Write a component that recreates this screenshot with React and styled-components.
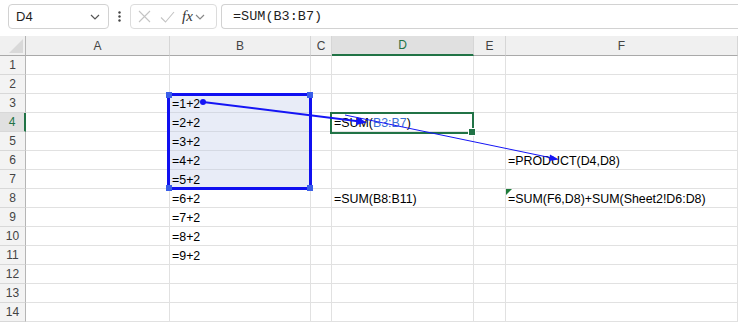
import React from 'react';
import styled, { createGlobalStyle } from 'styled-components';

const GlobalStyle = createGlobalStyle`
  html, body { margin: 0; padding: 0; background: #ffffff; }
  body { font-family: 'Liberation Sans', Arial, sans-serif; overflow: hidden; }
`;

const Page = styled.div`
  position: relative;
  width: 738px;
  height: 324px;
  overflow: hidden;
  background: #ffffff;
`;

const Toolbar = styled.div`
  display: flex;
  align-items: center;
  height: 25px;
  padding: 4px 0 7px 8px;
  gap: 0;
`;

const NameBox = styled.div`
  box-sizing: border-box;
  width: 101px;
  height: 25px;
  border: 1px solid #d2d2d2;
  border-radius: 4px;
  display: flex;
  align-items: center;
  justify-content: space-between;
  padding: 0 8px 0 7px;
  font-size: 13px;
  color: #1f1f1f;
`;

const Dots = styled.div`
  width: 21px;
  display: flex;
  justify-content: center;
`;

const FuncBox = styled.div`
  box-sizing: border-box;
  width: 87px;
  height: 25px;
  border: 1px solid #dcdcdc;
  border-radius: 4px;
  display: flex;
  align-items: center;
  padding: 0 4px 0 7px;
  gap: 9px;
`;

const Fx = styled.span`
  font-family: 'Liberation Serif', 'Times New Roman', serif;
  font-style: italic;
  font-size: 15px;
  color: #333333;
  margin-left: -2px;
  margin-right: -7px;
`;

const FormulaInput = styled.div`
  box-sizing: border-box;
  flex: 1;
  margin-left: 4px;
  height: 25px;
  border: 1px solid #d2d2d2;
  border-right: none;
  border-radius: 4px 0 0 4px;
  display: flex;
  align-items: center;
  padding-left: 11px;
  font-family: 'Liberation Mono', 'Courier New', monospace;
  font-size: 13.5px;
  color: #1f1f1f;
`;

const Sheet = styled.div`
  display: grid;
  grid-template-columns: 26px 144px 141px 21px 142px 32px 1fr;
  grid-template-rows: 20px;
  grid-auto-rows: 19px;
`;

const ColHead = styled.div`
  box-sizing: border-box;
  background: ${p => (p.$active ? '#e0e0e0' : '#f0f0f0')};
  border-right: 1px solid #d6d6d6;
  border-bottom: ${p => (p.$active ? '2px solid #217346' : '1px solid #a9a9a9')};
  display: flex;
  align-items: center;
  justify-content: center;
  font-size: 12px;
  color: ${p => (p.$active ? '#217346' : '#444444')};
  position: relative;
`;

const Corner = styled(ColHead)`
  border-right: 1px solid #b5b5b5;
`;

const RowHead = styled.div`
  box-sizing: border-box;
  background: ${p => (p.$active ? '#e0e0e0' : '#f3f3f3')};
  border-right: ${p => (p.$active ? '2px solid #217346' : '1px solid #b5b5b5')};
  border-bottom: 1px solid #d8d8d8;
  display: flex;
  align-items: center;
  justify-content: center;
  font-size: 12px;
  color: ${p => (p.$active ? '#217346' : '#444444')};
`;

const Cell = styled.div`
  box-sizing: border-box;
  position: relative;
  background: ${p => (p.$sel ? '#e8ecf7' : '#ffffff')};
  border-right: 1px solid #e1e1e1;
  border-bottom: 1px solid ${p => (p.$sel ? '#d5d9e3' : '#e1e1e1')};
  display: flex;
  align-items: center;
  padding-left: 2px;
  padding-top: 1px;
  font-size: 12.4px;
  color: #000000;
  white-space: nowrap;
  overflow: visible;
  z-index: ${p => (p.$text ? 1 : 0)};
`;

const RefText = styled.span`
  color: #3b6fd4;
`;

const ErrorMark = styled.span`
  position: absolute;
  left: 0;
  top: 0;
  width: 0;
  height: 0;
  border-top: 6px solid #1e7b3a;
  border-right: 6px solid transparent;
`;

const Overlay = styled.div`
  position: absolute;
  left: ${p => p.$x}px;
  top: ${p => p.$y}px;
  width: ${p => p.$w}px;
  height: ${p => p.$h}px;
  box-sizing: border-box;
  border: ${p => p.$bw}px solid ${p => p.$color};
  pointer-events: none;
  z-index: 2;
`;

const Handle = styled.span`
  position: absolute;
  width: ${p => p.$s}px;
  height: ${p => p.$s}px;
  background: ${p => p.$color};
  ${p => p.$pos}
`;

const Tracer = styled.svg`
  position: absolute;
  left: 0;
  top: 0;
  z-index: 3;
  pointer-events: none;
`;

const cols = ['A', 'B', 'C', 'D', 'E', 'F'];

const cellData = {
  'B3': '=1+2', 'B4': '=2+2', 'B5': '=3+2', 'B6': '=4+2', 'B7': '=5+2',
  'B8': '=6+2', 'B9': '=7+2', 'B10': '=8+2', 'B11': '=9+2',
  'D4': 'sumref', 'D8': '=SUM(B8:B11)',
  'F6': '=PRODUCT(D4,D8)', 'F8': '=SUM(F6,D8)+SUM(Sheet2!D6:D8)',
};

const Chevron = ({ color = '#555' }) => (
  <svg width="10" height="6" viewBox="0 0 10 6">
    <path d="M1 1l4 4 4-4" fill="none" stroke={color} strokeWidth="1.2" />
  </svg>
);

const App = () => {
  const rows = Array.from({ length: 14 }, (_, i) => i + 1);

  const renderCell = (c, r) => {
    const key = c + r;
    const val = cellData[key];
    const sel = c === 'B' && r >= 3 && r <= 7;
    let content = val;
    if (val === 'sumref') {
      content = (<>=SUM(<RefText>B3:B7</RefText>)</>);
    }
    return (
      <Cell key={key} $sel={sel} $text={!!val}>
        {key === 'F8' && <ErrorMark />}
        {content}
      </Cell>
    );
  };

  return (
    <>
      <GlobalStyle />
      <Page>
        <Toolbar>
          <NameBox>
            <span>D4</span>
            <Chevron />
          </NameBox>
          <Dots>
            <svg width="3" height="11" viewBox="0 0 3 11">
              <circle cx="1.5" cy="1.5" r="1.2" fill="#444" />
              <circle cx="1.5" cy="5.5" r="1.2" fill="#444" />
              <circle cx="1.5" cy="9.5" r="1.2" fill="#444" />
            </svg>
          </Dots>
          <FuncBox>
            <svg width="13" height="13" viewBox="0 0 13 13">
              <path d="M1 1l11 11M12 1L1 12" stroke="#c4c4c4" strokeWidth="1.1" fill="none" />
            </svg>
            <svg width="15" height="12" viewBox="0 0 15 12">
              <path d="M1 6.5l4.5 4.5L14 1" stroke="#c4c4c4" strokeWidth="1.1" fill="none" />
            </svg>
            <Fx>fx</Fx>
            <Chevron color="#888" />
          </FuncBox>
          <FormulaInput>=SUM(B3:B7)</FormulaInput>
        </Toolbar>

        <Sheet>
          <Corner>
            <svg width="14" height="14" viewBox="0 0 14 14" style={{ position: 'absolute', right: 2, bottom: 2 }}>
              <path d="M14 0L14 14L0 14Z" fill="#d9d9d9" />
            </svg>
          </Corner>
          {cols.map(c => (
            <ColHead key={c} $active={c === 'D'}>{c}</ColHead>
          ))}
          {rows.map(r => (
            <React.Fragment key={r}>
              <RowHead $active={r === 4}>{r}</RowHead>
              {cols.map(c => renderCell(c, r))}
            </React.Fragment>
          ))}
        </Sheet>

        <Overlay $x={167} $y={93} $w={145} $h={97} $bw={3} $color="#1010f0">
          <Handle $s={6} $color="#3a5ee8" $pos="left:-4px;top:-4px;" />
          <Handle $s={6} $color="#3a5ee8" $pos="right:-4px;top:-4px;" />
          <Handle $s={6} $color="#3a5ee8" $pos="left:-4px;bottom:-4px;" />
          <Handle $s={6} $color="#3a5ee8" $pos="right:-4px;bottom:-4px;" />
        </Overlay>

        <Overlay $x={330} $y={112} $w={144} $h={22} $bw={2} $color="#217346">
          <Handle $s={6} $color="#217346" $pos="right:-4px;bottom:-4px;border:1px solid #fff;" />
        </Overlay>

        <Tracer width="738" height="324" viewBox="0 0 738 324">
          <line x1="203" y1="102" x2="360" y2="121.5" stroke="#1515f5" strokeWidth="2" />
          <circle cx="203" cy="102" r="3" fill="#1515f5" />
          <path d="M367 122.5 L357 117 L356 125 Z" fill="#1515f5" />
          <line x1="345" y1="115" x2="552" y2="158" stroke="#1515f5" strokeWidth="1" />
          <path d="M559 159.5 L550 154.5 L549 161 Z" fill="#1515f5" />
        </Tracer>
      </Page>
    </>
  );
};

export default App;
